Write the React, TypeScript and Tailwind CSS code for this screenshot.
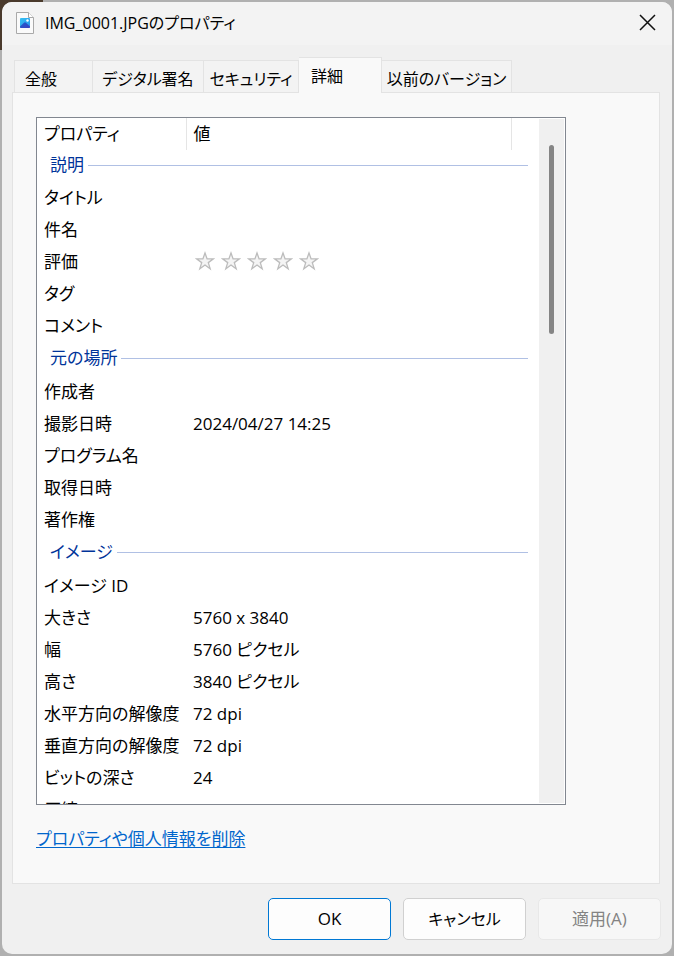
import { useState } from "react";
import clsx from "clsx";

interface PropertyRow {
  name: string;
  value?: string;
  rating?: boolean;
}

interface PropertyGroup {
  title: string;
  rows: PropertyRow[];
}

const tabs = [
  { label: "全般", className: "w-[79px] pl-[10px]" },
  { label: "デジタル署名", className: "w-[111px] justify-center" },
  { label: "セキュリティ", className: "w-[95px] justify-center" },
  { label: "詳細", className: "w-[83px] pl-[12px]" },
  { label: "以前のバージョン", className: "w-[130px] justify-center" },
];

const groups: PropertyGroup[] = [
  {
    title: "説明",
    rows: [
      { name: "タイトル" },
      { name: "件名" },
      { name: "評価", rating: true },
      { name: "タグ" },
      { name: "コメント" },
    ],
  },
  {
    title: "元の場所",
    rows: [
      { name: "作成者" },
      { name: "撮影日時", value: "2024/04/27 14:25" },
      { name: "プログラム名" },
      { name: "取得日時" },
      { name: "著作権" },
    ],
  },
  {
    title: "イメージ",
    rows: [
      { name: "イメージ ID" },
      { name: "大きさ", value: "5760 x 3840" },
      { name: "幅", value: "5760 ピクセル" },
      { name: "高さ", value: "3840 ピクセル" },
      { name: "水平方向の解像度", value: "72 dpi" },
      { name: "垂直方向の解像度", value: "72 dpi" },
      { name: "ビットの深さ", value: "24" },
      { name: "圧縮" },
    ],
  },
];

const FileIcon = () => (
  <svg width="18" height="22" viewBox="0 0 18 22" aria-hidden="true">
    <defs>
      <linearGradient id="sky" x1="0" y1="0" x2="1" y2="1">
        <stop offset="0" stopColor="#35c3f3" />
        <stop offset="1" stopColor="#2a8fe8" />
      </linearGradient>
      <linearGradient id="hill" x1="0" y1="0" x2="1" y2="1">
        <stop offset="0" stopColor="#1c62cf" />
        <stop offset="1" stopColor="#3f3fc0" />
      </linearGradient>
    </defs>
    <path d="M.5.5h12l5 5v16H.5z" fill="#fafafa" stroke="#a9a9a9" />
    <path d="M12.5.5v5h5" fill="#fff" stroke="#a9a9a9" />
    <rect x="4" y="6" width="10" height="10" rx="1" fill="url(#sky)" />
    <path
      d="M4 14.500l4-3.800q1-1 2 0l4 3.800v.5q0 1-1 1H5q-1 0-1-1z"
      fill="url(#hill)"
    />
    <circle cx="11.500" cy="8.500" r="1.200" fill="#fff" />
  </svg>
);

const Rating = () => {
  const [rating, setRating] = useState(0);

  return (
    <div className="flex gap-[6px] pb-0.5 pl-[2px]">
      {[1, 2, 3, 4, 5].map((n) => (
        <button
          key={n}
          type="button"
          aria-label={`評価 ${n}`}
          onClick={() => setRating(n)}
        >
          <svg width="20" height="20" viewBox="0 0 20 20" className="block">
            <path
              d="M10 2l2.100 5.900h6.300l-5.100 3.700 1.900 6.200-5.200-3.800-5.200 3.800 1.900-6.200-5.100-3.700h6.300z"
              fill={n <= rating ? "#f5c518" : "#f4f4f4"}
              stroke="#bcbcbc"
              strokeWidth="1.300"
            />
          </svg>
        </button>
      ))}
    </div>
  );
};

const PropertyTable = () => (
  <table className="w-full table-fixed border-collapse text-left">
    <colgroup>
      <col className="w-[149px]" />
      <col />
      <col className="w-7" />
    </colgroup>
    <thead>
      <tr className="h-8">
        <th className="border-r border-[#e5e5e5] pl-[7px] font-normal">
          プロパティ
        </th>
        <th className="border-r border-[#e5e5e5] pl-[7px] font-normal">値</th>
        <td></td>
      </tr>
    </thead>
    {groups.map((group, i) => (
      <tbody key={group.title}>
        <tr className={i === 0 ? "h-8" : "h-[34px]"}>
          <th
            colSpan={3}
            scope="rowgroup"
            className="pr-[11px] pb-0.5 pl-[13px] font-normal text-[#003399]"
          >
            <div className="flex items-center gap-1">
              {group.title}
              <span className="h-px flex-1 bg-[#b0c0e4]"></span>
            </div>
          </th>
        </tr>
        {group.rows.map((row) => (
          <tr key={row.name} className="h-8">
            <th
              scope="row"
              className="pl-[7px] font-normal whitespace-nowrap"
            >
              {row.name}
            </th>
            <td colSpan={2} className="pl-[7px]">
              {row.rating ? <Rating /> : row.value}
            </td>
          </tr>
        ))}
      </tbody>
    ))}
  </table>
);

export default function App() {
  const [activeTab, setActiveTab] = useState("詳細");

  return (
    <div className="h-screen bg-[#b0b0b0] bg-[linear-gradient(#4a3a2c,#4a3a2c)] bg-[length:43px_50px] bg-no-repeat p-0.5 font-['Open_Sans','Noto_Sans_CJK_JP',sans-serif] text-[17px] leading-6 text-black [font-feature-settings:'palt']">
      <div className="flex h-full flex-col overflow-hidden rounded-[10px] bg-[#f0f0f0]">
        <header className="flex h-[43px] shrink-0 items-center bg-[#f3f3f3] pr-4 pb-0.5 pl-[14px]">
          <FileIcon />
          <h1 className="ml-[11px] flex-1 text-base">
            IMG_0001.JPGのプロパティ
          </h1>
          <button type="button" aria-label="閉じる">
            <svg width="17" height="17" viewBox="0 0 17 17">
              <path
                d="M1 1l15 15M16 1L1 16"
                stroke="#111"
                strokeWidth="1.500"
                fill="none"
              />
            </svg>
          </button>
        </header>

        <div role="tablist" className="mt-3 ml-3 flex items-end text-base">
          {tabs.map((tab) => {
            const isActive = tab.label === activeTab;
            return (
              <button
                key={tab.label}
                type="button"
                role="tab"
                aria-selected={isActive}
                onClick={() => setActiveTab(tab.label)}
                className={clsx(
                  "flex items-center whitespace-nowrap border-t border-r border-[#e3e3e3] first:border-l",
                  tab.className,
                  isActive
                    ? "relative z-10 -mb-px h-9 bg-[#f9f9f9]"
                    : "h-8 bg-[#f3f3f3] pt-1"
                )}
              >
                {tab.label}
              </button>
            );
          })}
        </div>

        <main className="mr-3 ml-[10px] flex min-h-0 flex-1 flex-col border border-[#e3e3e3] bg-[#f9f9f9] pt-6 pr-[93px] pb-8 pl-[23px]">
          <div className="flex min-h-0 flex-1 border border-[#828790] bg-white">
            <div className="min-w-0 flex-1 overflow-hidden">
              <PropertyTable />
            </div>
            <div className="my-px mr-px w-[25px] bg-[#f0f0f0] pt-[26px]">
              <div className="mx-auto h-[189px] w-[5px] rounded-full bg-[#858585]"></div>
            </div>
          </div>
          <a
            href="#remove"
            className="mt-[22px] self-start text-[#0066cc] underline underline-offset-2"
          >
            プロパティや個人情報を削除
          </a>
        </main>

        <footer className="flex justify-end gap-3 pt-[14px] pr-[11px] pb-[14px]">
          <button
            type="button"
            className="h-[42px] w-[123px] rounded-[5px] border border-[#0078d4] bg-[#fdfdfd]"
          >
            OK
          </button>
          <button
            type="button"
            className="h-[42px] w-[123px] rounded-[5px] border border-[#d0d0d0] bg-[#fdfdfd] text-base"
          >
            キャンセル
          </button>
          <button
            type="button"
            disabled
            className="h-[42px] w-[123px] rounded-[5px] border border-[#e8e8e8] bg-[#f7f7f7] text-[#838383]"
          >
            適用(A)
          </button>
        </footer>
      </div>
    </div>
  );
}
